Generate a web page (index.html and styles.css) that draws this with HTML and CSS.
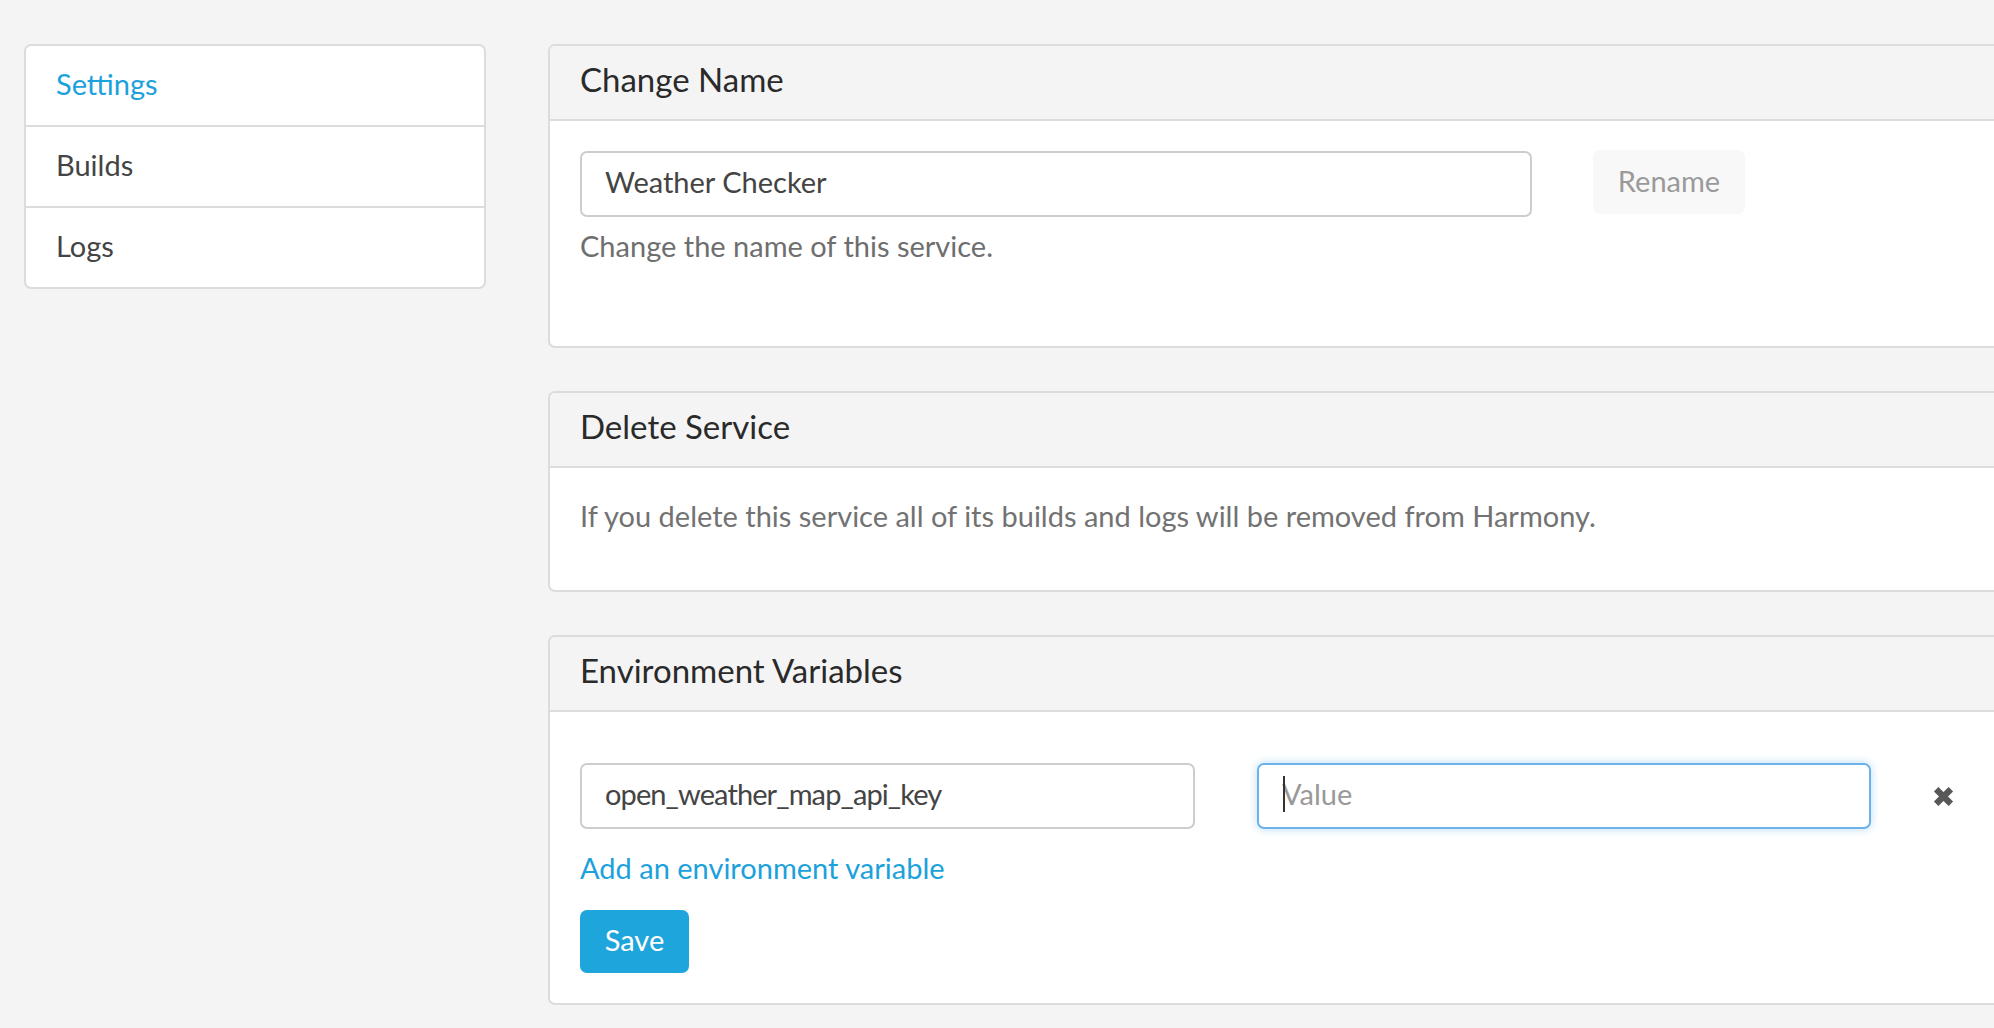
FILE: index.html
```html
<!DOCTYPE html>
<html lang="en">
<head>
<meta charset="utf-8">
<title>Service Settings</title>
<link rel="stylesheet" href="styles.css">
</head>
<body>
<div class="page">
  <nav class="sidenav">
    <a class="nav-item nav-item--active" href="#">Settings</a>
    <a class="nav-item" href="#">Builds</a>
    <a class="nav-item" href="#">Logs</a>
  </nav>
  <main class="content">
    <section class="card">
      <header class="card-header"><h3 class="card-title">Change Name</h3></header>
      <div class="card-body card-body--name">
        <div class="name-row">
          <input class="field field--name" type="text" value="Weather Checker">
          <button class="btn btn--light" type="button">Rename</button>
        </div>
        <p class="help">Change the name of this service.</p>
      </div>
    </section>
    <section class="card">
      <header class="card-header"><h3 class="card-title">Delete Service</h3></header>
      <div class="card-body card-body--delete">
        <p class="muted">If you delete this service all of its builds and logs will be removed from Harmony.</p>
      </div>
    </section>
    <section class="card">
      <header class="card-header"><h3 class="card-title">Environment Variables</h3></header>
      <div class="card-body card-body--env">
        <div class="env-row">
          <input class="field field--key" type="text" value="open_weather_map_api_key">
          <div class="value-wrap">
            <input class="field field--value field--focus" type="text" placeholder="Value">
          </div>
          <button class="remove" type="button" aria-label="Remove">
            <svg class="remove-icon" viewBox="0 0 20 20" width="21" height="21"><path d="M3 3 L17 17 M17 3 L3 17" stroke="#585858" stroke-width="6" fill="none"/></svg>
          </button>
        </div>
        <a class="add-link" href="#">Add an environment variable</a>
        <button class="btn btn--primary" type="button">Save</button>
      </div>
    </section>
  </main>
</div>
</body>
</html>
```

FILE: styles.css
```css
html, body {
  margin: 0;
  padding: 0;
  background: #f4f4f4;
  overflow: hidden;
}
body {
  font-family: Lato, "Open Sans", "Liberation Sans", sans-serif;
  color: #333;
  width: 1994px;
  height: 1028px;
}
.page {
  display: flex;
  align-items: flex-start;
  gap: 62px;
  padding: 44px 0 0 24px;
}
.sidenav {
  flex: 0 0 462px;
  box-sizing: border-box;
  background: #fff;
  border: 2px solid #dcdcdc;
  border-radius: 7px;
  display: flex;
  flex-direction: column;
  overflow: hidden;
}
.nav-item {
  display: flex;
  align-items: center;
  box-sizing: border-box;
  height: 79px;
  padding: 0 30px 5px;
  font-size: 29px;
  color: #444;
  text-decoration: none;
  border-top: 2px solid #dcdcdc;
}
.nav-item:first-child { border-top: 0; height: 79px; }
.nav-item + .nav-item { height: 81px; }
.nav-item--active { color: #1ba1db; }

.content {
  flex: 0 0 1520px;
  display: flex;
  flex-direction: column;
  gap: 43px;
}
.card {
  background: #fff;
  border: 2px solid #dcdcdc;
  border-radius: 7px;
  overflow: hidden;
}
.card-header {
  box-sizing: content-box;
  height: 65px;
  display: flex;
  align-items: center;
  padding: 0 30px 8px;
  background: #f4f4f4;
  border-bottom: 2px solid #dcdcdc;
}
.card-title {
  margin: 0;
  font-size: 33px;
  font-weight: 400;
  color: #2a2a2a;
}
.card-body { padding: 0 30px; }
.card-body--name { padding-top: 30px; padding-bottom: 79px; }
.card-body--delete { padding-top: 27px; padding-bottom: 53px; }
.card-body--env { padding-top: 51px; padding-bottom: 30px; display: flex; flex-direction: column; align-items: flex-start; }

.field {
  box-sizing: border-box;
  height: 66px;
  padding: 0 23px 5px;
  border: 2px solid #cdcdcd;
  border-radius: 7px;
  background: #fff;
  font-family: inherit;
  font-size: 29px;
  color: #444;
  outline: none;
}
.field::placeholder { color: #999; }
.field--focus {
  border-color: #6cb2ea;
  box-shadow: 0 0 10px rgba(102, 175, 233, 0.45);
}
.name-row {
  display: flex;
  align-items: flex-start;
  gap: 61px;
}
.field--name { width: 952px; }
.btn {
  box-sizing: border-box;
  border: 0;
  border-radius: 7px;
  padding: 0 0 4px;
  font-family: inherit;
  font-size: 29px;
  cursor: pointer;
}
.btn--light {
  width: 152px;
  height: 64px;
  margin-top: -1px;
  background: #f8f8f8;
  color: #9a9a9a;
}
.btn--primary {
  width: 109px;
  height: 63px;
  margin-top: 21px;
  background: #1ea5dc;
  color: #fff;
}
.help {
  margin: 8px 0 0;
  line-height: 42px;
  font-size: 29px;
  color: #6e6e6e;
}
.muted {
  margin: 0;
  line-height: 42px;
  font-size: 29px;
  color: #727272;
}
.env-row {
  display: flex;
  align-items: center;
  gap: 62px;
}
.field--key { width: 615px; letter-spacing: -0.9px; }
.value-wrap { position: relative; }
.value-wrap::before {
  content: "";
  position: absolute;
  left: 26px;
  top: 13px;
  width: 2px;
  height: 36px;
  background: #333;
}
.field--value { width: 614px; display: block; }
.remove {
  padding: 0;
  margin: 0;
  border: 0;
  background: none;
  width: 21px;
  height: 21px;
  display: flex;
}
.remove-icon { display: block; }
.add-link {
  margin-top: 18px;
  line-height: 42px;
  font-size: 29px;
  color: #1ba1db;
  text-decoration: none;
}
```
